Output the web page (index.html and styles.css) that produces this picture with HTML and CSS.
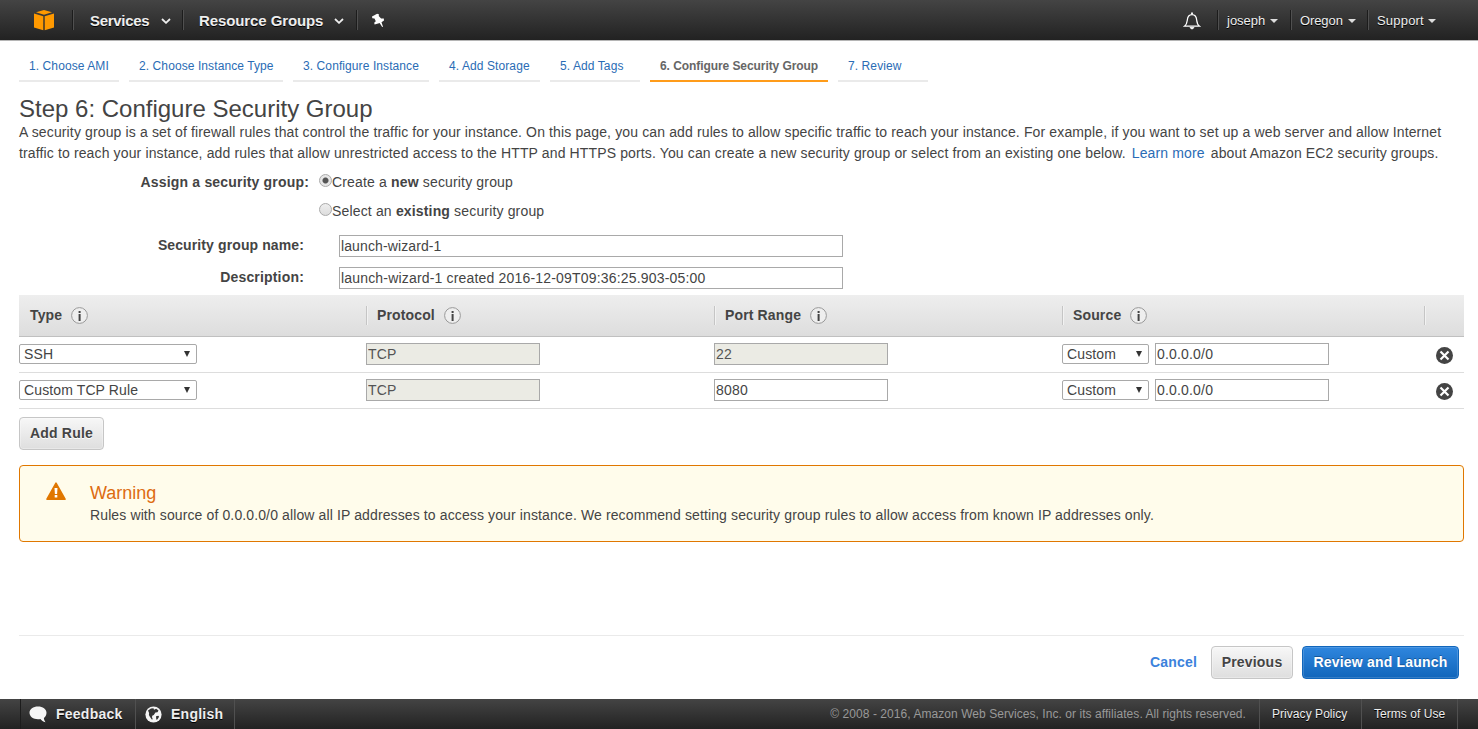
FILE: index.html
```html
<!DOCTYPE html>
<html lang="en">
<head>
<meta charset="utf-8">
<title>Configure Security Group</title>
<link rel="stylesheet" href="styles.css">
</head>
<body>
<header class="topbar">
  <div class="brand"><svg width="22" height="22" viewBox="0 0 22 22" fill="#ff9900"><path d="M11 0 19 2.300 11 4.800 3 2.300z"/><path d="M1 3.600 10.300 6.300v14L1 17.600z"/><path d="M21 3.600 11.700 6.300v14l9.300-2.700z"/></svg></div>
  <nav class="nav-left">
    <div class="nav-main services"><span>Services</span><svg class="chev" width="10" height="6" viewBox="0 0 10 6"><path d="M1 1l4 3.800L9 1"/></svg></div>
    <div class="nav-main groups"><span>Resource Groups</span><svg class="chev" width="10" height="6" viewBox="0 0 10 6"><path d="M1 1l4 3.800L9 1"/></svg></div>
    <div class="nav-main pin"><svg width="14" height="15" viewBox="0 0 14 15" fill="#fff"><path d="M6.200.8 1 3.400l.3 1.900 2.200.3 1.300 2.700L3.200 9.800l.4 1.700 3.500-.9 1.500-.5 2.600 4 .8-.4-1.500-4.400L13 7.400l-.2-1.800-2.700-.2-2.400-2.300.4-1.600z"/></svg></div>
  </nav>
  <nav class="nav-right">
    <div class="bell"><svg width="18" height="18" viewBox="0 0 18 18" fill="none" stroke="#fff" stroke-width="1.3"><path d="M1.500 14.200c2.200-1.600 2.500-3 2.800-6C4.600 4.300 6.500 2.700 9 2.700s4.400 1.600 4.700 5.500c.3 3 .6 4.400 2.800 6z"/><path d="M7 15.500h4L9.500 17h-1zM8.500 2V.8h1V2z" fill="#fff" stroke-width=".8"/></svg></div>
    <div class="nav-small user"><span>joseph</span><i class="caret"></i></div>
    <div class="nav-small region"><span>Oregon</span><i class="caret"></i></div>
    <div class="nav-small support"><span>Support</span><i class="caret"></i></div>
  </nav>
</header>

<main class="page">
  <ol class="steps">
    <li>1. Choose AMI</li><li>2. Choose Instance Type</li><li>3. Configure Instance</li><li>4. Add Storage</li><li>5. Add Tags</li><li class="current">6. Configure Security Group</li><li>7. Review</li>
  </ol>
  <h1>Step 6: Configure Security Group</h1>
  <p class="intro"><span>A security group is a set of firewall rules that control the traffic for your instance. On this page, you can add rules to allow specific traffic to reach your instance. For example, if you want to set up a web server and allow Internet</span><br><span>traffic to reach your instance, add rules that allow unrestricted access to the HTTP and HTTPS ports. You can create a new security group or select from an existing one below. <a>Learn more</a> about Amazon EC2 security groups.</span></p>

  <section class="form">
    <div class="choice"><b class="label assign">Assign a security group:</b><i class="radio on"></i><span>Create a <b>new</b> security group</span></div>
    <div class="choice"><b class="label assign"></b><i class="radio"></i><span>Select an <b>existing</b> security group</span></div>
    <div class="field name"><b class="label">Security group name:</b><input value="launch-wizard-1"></div>
    <div class="field"><b class="label">Description:</b><input value="launch-wizard-1 created 2016-12-09T09:36:25.903-05:00"></div>
  </section>

  <section class="rules">
    <div class="row head">
      <div class="th"><span>Type</span><svg class="info" width="17" height="17" viewBox="0 0 17 17"><circle cx="8.500" cy="8.500" r="7.900"/><path d="M7.600 4h2v2h-2zM7.600 7h2v7h-2z"/></svg></div>
      <div class="th"><span>Protocol</span><svg class="info" width="17" height="17" viewBox="0 0 17 17"><circle cx="8.500" cy="8.500" r="7.900"/><path d="M7.600 4h2v2h-2zM7.600 7h2v7h-2z"/></svg></div>
      <div class="th"><span>Port Range</span><svg class="info" width="17" height="17" viewBox="0 0 17 17"><circle cx="8.500" cy="8.500" r="7.900"/><path d="M7.600 4h2v2h-2zM7.600 7h2v7h-2z"/></svg></div>
      <div class="th"><span>Source</span><svg class="info" width="17" height="17" viewBox="0 0 17 17"><circle cx="8.500" cy="8.500" r="7.900"/><path d="M7.600 4h2v2h-2zM7.600 7h2v7h-2z"/></svg></div>
      <div class="th"></div>
    </div>
    <div class="row">
      <div><div class="select wide">SSH<i></i></div></div>
      <div><input value="TCP" disabled></div>
      <div><input value="22" disabled></div>
      <div class="source"><div class="select">Custom<i></i></div><input value="0.0.0.0/0"></div>
      <div class="remove"><svg width="17" height="17" viewBox="0 0 17 17"><circle cx="8.500" cy="8.500" r="8.500" fill="#444"/><path d="M4.500 4.500l8 8M12.500 4.500l-8 8" stroke="#fff" stroke-width="2.200"/></svg></div>
    </div>
    <div class="row">
      <div><div class="select wide">Custom TCP Rule<i></i></div></div>
      <div><input value="TCP" disabled></div>
      <div><input value="8080"></div>
      <div class="source"><div class="select">Custom<i></i></div><input value="0.0.0.0/0"></div>
      <div class="remove"><svg width="17" height="17" viewBox="0 0 17 17"><circle cx="8.500" cy="8.500" r="8.500" fill="#444"/><path d="M4.500 4.500l8 8M12.500 4.500l-8 8" stroke="#fff" stroke-width="2.200"/></svg></div>
    </div>
  </section>
  <button class="btn add">Add Rule</button>

  <section class="warning">
    <svg width="20" height="19" viewBox="0 0 20 19"><path d="M10 1.200 19 17.200H1z" fill="#e07700" stroke="#e07700" stroke-width="1.600" stroke-linejoin="round"/><path d="M8.500 6h3l-.4 6H8.900zM8.700 13h2.600v2.600H8.700z" fill="#fff"/></svg>
    <div><h2>Warning</h2><p>Rules with source of 0.0.0.0/0 allow all IP addresses to access your instance. We recommend setting security group rules to allow access from known IP addresses only.</p></div>
  </section>

  <div class="actions"><a class="cancel">Cancel</a><button class="btn prev">Previous</button><button class="btn primary">Review and Launch</button></div>
</main>

<footer class="footer">
  <div class="foot feedback"><svg width="18" height="17" viewBox="0 0 18 17" fill="#f5f5f5"><path d="M9 .5c4.800 0 8.500 2.700 8.500 6.300 0 2.300-1 4-2.600 5.100.1 1.800.7 3 1.600 4.300-2.300-.5-4-1.500-5.100-3.100-.8.100-1.600.2-2.400.2C4.200 13.300.5 10.500.5 6.800S4.200.5 9 .5z"/></svg><span>Feedback</span></div>
  <div class="foot english"><svg width="17" height="17" viewBox="0 0 17 17"><circle cx="8.500" cy="8.500" r="8.100" fill="#f5f5f5"/><path d="M3 4.500 6 2.500l2.500-.3.500 1.500 2.200-.9 2.300 1.800-1 1.600-2.100.3-1.600 2.600-1.600.6-.2 1.500.8 2-1 .3-1.800-2.500L3.900 9l.2-2zM11 10.300l2.300-.6.800 1-1.500 2.600-1.300.5z" fill="#333"/></svg><span>English</span></div>
  <div class="copy">© 2008 - 2016, Amazon Web Services, Inc. or its affiliates. All rights reserved.</div>
  <div class="foot legal privacy">Privacy Policy</div>
  <div class="foot legal terms">Terms of Use</div>
</footer>
</body>
</html>
```
FILE: styles.css
```css
* { box-sizing: border-box; }
body { margin: 0; height: 729px; display: flex; flex-direction: column; overflow: hidden; background: #fff; color: #444; font-family: "Liberation Sans", Arial, sans-serif; font-size: 14px; letter-spacing: 0.12px; white-space: nowrap; }
svg { display: block; flex: none; }
h1, h2, p, ol { margin: 0; padding: 0; font-weight: normal; }
input { font: inherit; color: #444; letter-spacing: 0.18px; border: 1px solid #a9a9a9; background: #fff; height: 22px; padding: 0 1px; border-radius: 0; margin: 0; }
input:disabled { background: #ebebe4; color: #545454; }

.topbar { height: 41px; flex: none; display: flex; border-bottom: 1px solid #b5b5b5; background: linear-gradient(#444, #222); color: #eee; text-shadow: 0 1px 0 #000; }
.brand { width: 73px; padding: 10px 0 0 33px; }
.nav-left, .nav-right { display: flex; padding-top: 10px; height: 40px; }
.nav-right { margin-left: auto; }
.nav-main, .nav-small { height: 20px; display: flex; align-items: center; border-left: 1px solid #505050; box-shadow: -1px 0 0 #1c1c1c; }
.nav-main { padding-left: 16px; font-size: 15px; font-weight: bold; letter-spacing: -0.1px; }
.services { width: 110px; letter-spacing: -0.3px; }
.services span { width: 71px; }
.groups { width: 174px; padding-left: 15px; }
.groups span { width: 135px; }
.pin { padding-left: 13px; }
.chev { fill: none; stroke: #eee; stroke-width: 1.8; margin-top: 2px; }
.bell { width: 35px; padding-top: 2px; }
.nav-small { font-size: 13px; letter-spacing: 0; }
.nav-small span { margin-right: 5px; }
.user { width: 73px; padding-left: 8px; }
.region { width: 77px; padding-left: 8px; letter-spacing: -0.1px; }
.support { width: 110px; padding-left: 8px; letter-spacing: 0.2px; }
.support span { margin-right: 4px; }
.caret { width: 0; height: 0; border: 4px solid transparent; border-top-color: #ddd; border-bottom: 0; margin-top: 1px; }

.page { flex: 1; display: flex; flex-direction: column; padding: 0 14px 0 19px; }
.steps { list-style: none; display: grid; grid-template-columns: 100px 154px 136px 101px 90px 178px 90px; gap: 10px; height: 41px; }
.steps li { padding: 17px 0 0 10px; border-bottom: 2px solid #eaeaea; font-size: 12px; line-height: 16px; letter-spacing: 0.09px; color: #2a6cb5; }
.steps .current { border-color: #ff9c1a; color: #666; font-weight: bold; letter-spacing: -0.07px; }
h1 { font-size: 24px; line-height: 30px; height: 30px; margin-top: 12px; letter-spacing: 0; }
.intro { margin-top: -2px; line-height: 21px; height: 42px; letter-spacing: 0.133px; }
.intro a { color: #2a6cb5; margin: 0 2px; }

.form { height: 131px; padding-top: 3px; }
.choice { display: flex; height: 29px; align-items: center; letter-spacing: 0.16px; }
.label { text-align: right; width: 285px; letter-spacing: 0.18px; }
.name .label { letter-spacing: 0.11px; }
.label.assign { width: 290px; }
.radio { width: 13px; height: 13px; margin: -3px 0 0 10px; border: 1px solid #aaa; border-radius: 50%; background: linear-gradient(#eee, #ddd); }
.radio.on { background: radial-gradient(circle, #555 2.500px, #e6e6e6 3.500px); }
.field { display: flex; height: 32px; padding-top: 4px; }
.field.name { margin-top: 6px; }
.field .label { line-height: 20px; }
.field input { width: 504px; margin-left: 35px; }
.name input { letter-spacing: 0.11px; }

.row { display: grid; grid-template-columns: 347px 348px 348px 362px 40px; height: 36px; width: 1445px; padding-top: 6px; border-bottom: 1px solid #ddd; }
.row.head { height: 42px; padding-top: 11px; background: linear-gradient(#eee, #ddd); border-bottom-color: #c0c0c0; font-weight: bold; }
.th { display: flex; align-items: center; height: 19px; padding-left: 10px; border-left: 1px solid #c5c5c5; box-shadow: inset 1px 0 0 #f2f2f2; letter-spacing: 0.14px; }
.th:first-child { border-color: transparent; box-shadow: none; }
.th span { margin-right: 9px; margin-top: -2px; }
.info { fill: #444; }
.info circle { fill: #eee; stroke: #999; }
.row input { width: 174px; }
.select { display: flex; align-items: center; justify-content: space-between; width: 87px; height: 20px; margin-top: 1px; padding: 0 6px 0 4px; border: 1px solid #a9a9a9; border-radius: 2px; }
.select.wide { width: 178px; }
.select i { width: 0; height: 0; border: 3.500px solid transparent; border-top: 6px solid #333; border-bottom: 0; }
.source { display: flex; gap: 6px; }
.remove { padding: 4px 0 0 12px; }

.btn { font: bold 14px "Liberation Sans", Arial, sans-serif; letter-spacing: 0.2px; color: #444; height: 33px; border: 1px solid #c6c6c6; border-radius: 4px; background: linear-gradient(#f7f7f7, #dedede); padding: 0 0 2px; box-shadow: inset 0 0 0 1px rgba(255, 255, 255, 0.3); text-shadow: 0 1px 0 #fff; }
.add { width: 85px; margin-top: 8px; }
.warning { width: 1445px; height: 77px; margin-top: 15px; padding: 16px 0 0 26px; display: flex; gap: 24px; border: 1px solid #e07700; border-radius: 4px; background: #fffceb; }
.warning h2 { font-size: 18px; line-height: 23px; color: #dd6b10; letter-spacing: 0; }
.warning p { line-height: 20px; }
.actions { width: 1445px; height: 64px; margin-top: auto; border-top: 1px solid #eaeaea; padding: 10px 5px 0 0; display: flex; justify-content: flex-end; }
.cancel { font-weight: bold; letter-spacing: 0.2px; color: #3b82dc; line-height: 32px; margin-right: 14px; }
.prev { width: 82px; margin-right: 9px; }
.primary { width: 157px; color: #fff; border-color: #1166bb; background: linear-gradient(#2f86de, #1166bb); text-shadow: 0 -1px 0 #15589c; box-shadow: inset 0 0 0 1px rgba(255, 255, 255, 0.15); }

.footer { height: 30px; flex: none; display: flex; background: linear-gradient(#444, #222); color: #eee; line-height: 30px; padding: 0 20px; }
.foot { display: flex; align-items: center; border-right: 1px solid #505050; font-weight: bold; text-shadow: 0 1px 0 #000; letter-spacing: 0.25px; }
.feedback { width: 116px; padding-left: 8px; gap: 9px; border-left: 1px solid #1c1c1c; }
.english { width: 99px; padding-left: 9px; gap: 9px; }
.copy { margin-left: auto; margin-right: 13px; font-size: 12px; letter-spacing: 0.055px; color: #999; }
.legal { font-size: 12px; font-weight: normal; letter-spacing: 0.05px; padding-left: 12px; border-left: 1px solid #505050; border-right: 0; }
.privacy { width: 102px; }
.terms { width: 97px; border-right: 1px solid #505050; }
```
